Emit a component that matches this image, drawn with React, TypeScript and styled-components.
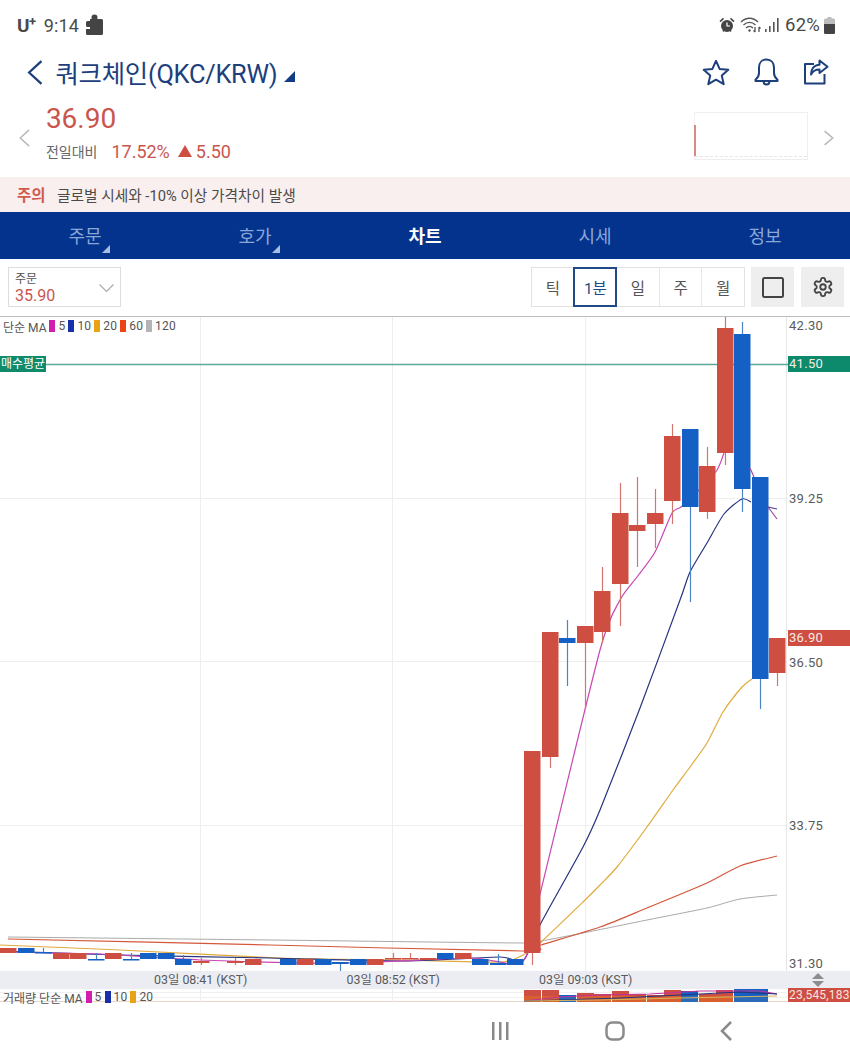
import React from "react";
import styled, { createGlobalStyle } from "styled-components";

const Global = createGlobalStyle`
  html, body { margin: 0; padding: 0; background: #fff; }
  #root { width: 850px; height: 1062px; overflow: hidden; }
  * { box-sizing: border-box; }
`;

const FONT = `Roboto, "Noto Sans CJK KR", "Noto Sans", sans-serif`;
const RED = "#cf4e42";
const BLUE = "#1560c4";
const NAVY = "#1d3f7c";

const Page = styled.div`
  width: 850px; height: 1062px; display: flex; flex-direction: column;
  font-family: ${FONT}; background: #fff; color: #444;
`;

/* status bar */
const StatusBar = styled.div`
  height: 46px; flex: none; display: flex; align-items: center; justify-content: space-between;
  padding: 4px 15px 0 17px; color: #4a4a4a;
`;
const StatusGroup = styled.div`display: flex; align-items: center;`;
const Carrier = styled.span`font-size: 19px; font-weight: 700; margin-right: 8px; letter-spacing: -0.5px; sup { font-size: 13px; line-height: 0; vertical-align: 6px; }`;
const Clock = styled.span`font-size: 18px; margin-right: 6px; letter-spacing: 0.2px;`;
const Battery = styled.span`font-size: 18.5px; margin: 0 4px 0 5px; letter-spacing: 0.2px;`;

/* header */
const Header = styled.div`
  height: 52px; flex: none; display: flex; align-items: center; padding: 0 21px 0 26px; color: ${NAVY};
`;
const Title = styled.h1`
  margin: 0 7px 0 13px; font-size: 25.4px; font-weight: 400; letter-spacing: -0.25px; color: ${NAVY};
`;
const HeaderIcons = styled.div`margin-left: auto; display: flex; align-items: center; gap: 24px;`;

/* price row */
const PriceRow = styled.div`
  height: 79px; flex: none; display: flex; align-items: center; padding: 0 16px 0 18px;
`;
const PriceBlock = styled.div`margin-left: 16px; align-self: flex-start; display: flex; flex-direction: column; padding-top: 3px;`;
const Price = styled.div`font-size: 28px; line-height: 36px; color: #c9564e;`;
const ChangeLine = styled.div`display: flex; align-items: center; height: 26px; margin-top: 1px; color: #c9564e; font-size: 18px;`;
const ChangeLabel = styled.span`font-size: 14px; color: #666; margin-right: 14px;`;
const UpMark = styled.span`
  width: 0; height: 0; margin: 0 4px 0 8px;
  border-left: 7.5px solid transparent; border-right: 7.5px solid transparent; border-bottom: 12px solid #cf4e42;
`;
const Spark = styled.div`
  margin-left: auto; align-self: flex-start; margin-top: 14px; width: 114px; height: 48px; border: 1px solid #f0eeee; position: relative;
  border-bottom-color: #eee;
`;
const SparkTick = styled.span`position: absolute; left: -1px; top: 12px; width: 2px; height: 31px; background: #d98a84;`;
const SparkBase = styled.span`position: absolute; left: 0; right: 0; top: 43px; border-top: 1px dashed #e8e4e4;`;

/* notice */
const Notice = styled.div`
  height: 35px; flex: none; background: #f9efee; display: flex; align-items: center; padding: 0 0 1px 17px; font-size: 14.7px; color: #4a4a4a;
`;
const NoticeTag = styled.b`color: #cf5a4e; font-size: 15.5px; width: 40px; font-weight: 700;`;

/* tabs */
const Tabs = styled.div`
  height: 47px; flex: none; background: #04338d; display: grid; grid-template-columns: repeat(5, 170px);
`;
const Tab = styled.div<{ $active?: boolean; $menu?: boolean }>`
  position: relative; display: flex; align-items: center; justify-content: center;
  font-size: 18px; padding-bottom: 1px; font-weight: ${(p) => (p.$active ? 700 : 400)};
  color: ${(p) => (p.$active ? "#fff" : "#8ba7d8")};
  &::after {
    content: ""; display: ${(p) => (p.$menu ? "block" : "none")}; position: absolute;
    left: calc(50% + 17px); top: 33px; width: 0; height: 0;
    border-left: 8px solid transparent; border-bottom: 8px solid #a6bce4;
  }
`;

/* toolbar */
const Toolbar = styled.div`
  height: 57px; flex: none; display: flex; align-items: center; padding: 0 6px 1px 8px;
`;
const Select = styled.div`
  width: 113px; height: 40px; border: 1px solid #ddd; display: flex; align-items: center; justify-content: space-between;
  padding: 2px 6px 0 6px;
`;
const SelectText = styled.div`display: flex; flex-direction: column; line-height: 15px; font-size: 12px; color: #555;`;
const SelectValue = styled.span`font-size: 16px; line-height: 17px; color: #c9564e;`;
const Segments = styled.div`
  margin-left: auto; display: flex; width: 214px; height: 40px; border: 1px solid #e2e2e2;
`;
const Segment = styled.div<{ $on?: boolean }>`
  flex: 1; display: flex; align-items: center; justify-content: center; font-size: 15.5px; color: ${(p) => (p.$on ? "#1f4a86" : "#555")};
  border-left: 1px solid #e6e6e6;
  &:first-child { border-left: 0; }
  ${(p) => p.$on && `outline: 2px solid #1f4a86; outline-offset: -1px; z-index: 1;`}
`;
const ToolButton = styled.div`
  width: 43px; height: 40px; margin-left: 6px; background: #eeeeee; display: flex; align-items: center; justify-content: center;
  & + & { margin-left: 7px; }
`;

/* chart */
const Chart = styled.div`flex: none; height: 686px; display: flex; flex-direction: column; border-top: 1px solid #bdbdbd;`;
const PricePane = styled.div`position: relative; height: 654px;`;
const PaneSvg = styled.svg`display: block; position: absolute; left: 0; top: 0;`;
const Legend = styled.div<{ $pos: number }>`
  position: absolute; left: 3px; top: ${(p) => p.$pos}px; display: flex; align-items: center; font-size: 12px; height: 14px; color: #555; z-index: 2;
`;
const LegendName = styled.span`margin-right: 3px;`;
const Swatch = styled.i<{ $c: string }>`
  display: block; width: 6px; height: 12px; background: ${(p) => p.$c}; margin-right: 3px;
`;
const LegendNum = styled.span`margin-right: 3px; letter-spacing: 0.2px;`;
const PriceLabel = styled.span`
  position: absolute; left: 789px; transform: translateY(-50%); font-size: 13px; color: #5a5a5a; letter-spacing: 0.3px;
`;
const PriceTag = styled.span<{ $c: string }>`
  position: absolute; left: 788px; width: 62px; height: 16px; padding-left: 1px; background: ${(p) => p.$c};
  color: #f4ece6; font-size: 13px; line-height: 16px; letter-spacing: 0.3px;
`;
const AvgTag = styled.span`
  position: absolute; left: 0; top: 39px; width: 46px; height: 16px; background: #0f8b6c; color: #fff;
  font-size: 12px; line-height: 16px; text-align: center; white-space: nowrap; overflow: hidden;
`;
const TimeBand = styled.div`
  position: relative; height: 18px; flex: none; background: #ebedf3; font-size: 12.4px; color: #5a5a5a; line-height: 18px;
  display: grid; grid-template-columns: 154px 192.5px 192.5px 1fr;
`;
const TimeCell = styled.span`white-space: nowrap;`;
const SortMark = styled.span`
  position: absolute; left: 812px; top: 2px; display: flex; flex-direction: column; gap: 2px;
  &::before, &::after { content: ""; width: 0; height: 0; border-left: 6.5px solid transparent; border-right: 6.5px solid transparent; }
  &::before { border-bottom: 6px solid #8d8d8d; }
  &::after { border-top: 6px solid #8d8d8d; }
`;
const VolumePane = styled.div`position: relative; height: 13px; flex: none;`;
const VolumeTag = styled.span`
  position: absolute; left: 788px; top: -1px; width: 62px; height: 14px; background: ${RED}; color: #f6e4df;
  font-size: 12px; line-height: 14px; padding-left: 1px; white-space: nowrap; z-index: 2; letter-spacing: 0.2px;
`;

/* nav */
const NavBar = styled.div`
  flex: 1; display: flex; align-items: center; padding: 0 118px 2px 490px; justify-content: space-between;
`;

const TOP = 317;
type C = [number, number, number, number, number, "r" | "b" | "h"];
const candles: C[] = [
  [777, 638, 673, 638, 686, "r"], [760, 477, 679, 477, 709, "b"], [742, 334, 489, 322, 512, "b"],
  [725, 328, 453, 316, 465, "r"], [707, 466, 512, 447, 519, "r"], [690, 429, 507, 429, 602, "b"],
  [672, 436, 501, 424, 524, "r"], [655, 513, 524, 489, 548, "r"], [637, 525, 531, 477, 567, "r"],
  [620, 513, 584, 483, 626, "r"], [602, 591, 632, 567, 643, "r"], [585, 626, 643, 626, 709, "r"],
  [567, 638, 643, 620, 686, "b"], [550, 632, 757, 632, 768, "r"], [532, 751, 953, 751, 965, "r"],
  [515, 959, 965, 959, 965, "b"], [498, 963, 965, 954, 965, "h"], [480, 959, 965, 959, 965, "b"],
  [463, 953, 959, 953, 959, "r"], [445, 953, 959, 953, 959, "b"], [428, 958, 960, 958, 960, "r"], [410, 958, 959, 953, 959, "r"],
  [393, 958, 959, 953, 959, "r"], [375, 959, 965, 959, 965, "r"], [358, 959, 965, 959, 965, "b"],
  [340, 962, 964, 962, 971, "b"], [323, 959, 965, 959, 965, "b"], [305, 959, 965, 959, 965, "r"],
  [288, 959, 965, 959, 965, "b"], [253, 959, 965, 959, 965, "r"], [235, 961, 963, 958, 965, "r"], [201, 961, 963, 958, 965, "r"],
  [183, 959, 965, 955, 965, "b"], [166, 953, 959, 953, 959, "b"], [148, 953, 959, 953, 959, "b"],
  [131, 959, 959, 953, 959, "h"], [113, 953, 959, 953, 959, "r"], [96, 959, 959, 953, 959, "h"],
  [78, 953, 959, 953, 959, "r"], [61, 953, 959, 953, 959, "r"], [43, 952, 952, 948, 953, "h"],
  [26, 948, 953, 948, 953, "b"], [8, 948, 953, 948, 953, "r"],
];
/* a smooth curve through the sampled points of a moving average */
const smooth = (pts: number[][], off: number) => {
  const p = pts.map(([x, y]) => [x, y - off]);
  let d = `M${p[0][0]},${p[0][1]}`;
  for (let i = 0; i < p.length - 1; i++) {
    const a = p[Math.max(i - 1, 0)], b = p[i], c = p[i + 1], e = p[Math.min(i + 2, p.length - 1)];
    const k = 0.12;
    d += ` C${b[0] + (c[0] - a[0]) * k},${b[1] + (c[1] - a[1]) * k} ${c[0] - (e[0] - b[0]) * k},${c[1] - (e[1] - b[1]) * k} ${c[0]},${c[1]}`;
  }
  return d;
};
const ma5 = [[0, 952], [100, 954], [200, 960], [340, 963], [470, 958], [523, 961], [541, 890], [600, 650], [620, 600], [637, 577], [655, 552], [672, 513], [681, 507], [699, 490], [717, 470], [724, 453]];
const ma5b = [[750, 468], [754, 477]];
const ma5c = [[768, 507], [777, 519]];
const ma10 = [[0, 951], [120, 955], [270, 958], [400, 961], [500, 957], [523, 961], [541, 923], [583, 847], [600, 810], [640, 708], [680, 600], [690, 572], [707, 543], [724, 514], [742, 499], [751, 502]];
const ma10b = [[768, 507], [777, 509]];
const ma20 = [[0, 945], [120, 950], [280, 958], [400, 960], [500, 962], [523, 955], [541, 942], [583, 902], [600, 885], [617, 867], [647, 827], [673, 790], [690, 767], [707, 743], [723, 712], [742, 687], [752, 679]];
const ma60 = [[8, 939], [270, 945], [523, 951], [541, 945], [600, 927], [647, 908], [707, 883], [740, 866], [777, 856]];
const ma120 = [[8, 937], [270, 940], [523, 943], [541, 941], [583, 933], [647, 920], [707, 908], [740, 899], [777, 895]];
const Line = ({ pts, c, w = 1.2 }: { pts: number[][]; c: string; w?: number }) => (
  <path d={smooth(pts, TOP)} fill="none" stroke={c} strokeWidth={w} />
);

const volumes: [number, number, "r" | "b"][] = [
  [524, 990, "r"], [542, 990, "r"], [559, 995, "b"], [577, 993, "r"], [594, 994, "r"], [612, 991, "r"], [629, 994, "r"],
  [647, 995, "r"], [664, 990, "r"], [681, 991, "b"], [699, 994, "r"], [716, 990, "r"], [734, 988, "b"], [751, 988, "b"],
];

const Back = ({ size, color, w }: { size: number; color: string; w: number }) => (
  <svg width={size * 0.66} height={size} viewBox="0 0 16 24" fill="none" stroke={color} strokeWidth={w}>
    <path d="M15 1 3 12l12 11" />
  </svg>
);

export default function App() {
  return (
    <Page>
      <Global />
      <StatusBar>
        <StatusGroup>
          <Carrier>U<sup>+</sup></Carrier>
          <Clock>9:14</Clock>
          <svg width="18" height="22" viewBox="0 0 18 22" fill="#444">
            <circle cx="9.500" cy="3.500" r="3" />
            <path d="M5 5h11.500A1.500 1.500 0 0 1 18 6.500v13a1.500 1.500 0 0 1-1.500 1.500h-14A1.500 1.500 0 0 1 1 19.500V15h4v-2H2.500A1.500 1.500 0 0 1 1 11.500v-3A1.500 1.500 0 0 1 2.500 7H5z" />
          </svg>
        </StatusGroup>
        <StatusGroup>
          <svg width="16" height="16" viewBox="0 0 16 16" fill="#444" style={{ marginRight: 5 }}>
            <circle cx="8" cy="9" r="6" />
            <path d="M0.5 4 4 .8 5 2 1.600 5.200zM15.500 4 12 .8 11 2l3.400 3.200zM3.500 14l1-1.200 1 .8L4.300 15zM12.500 14l-1-1.200-1 .8 1 1.400z" />
            <path d="M8 5.500V9h3" stroke="#fff" strokeWidth="1.200" fill="none" />
          </svg>
          <svg width="21" height="18" viewBox="0 0 21 18" fill="none" stroke="#555" strokeWidth="1.300" style={{ marginRight: 4 }}>
            <path d="M1 6c5-5 12-5 17 0M3.500 9c3.500-3.500 8.500-3.500 12 0M6 12c2-2 5-2 7 0" />
            <circle cx="9.500" cy="14.500" r="1.200" fill="#555" stroke="none" />
            <path d="M15 11v5M13.500 14.500l1.500 1.500M19 11v5M19 11l1.500 1.500" />
          </svg>
          <svg width="15" height="16" viewBox="0 0 15 16" fill="#555">
            <rect x="0" y="12" width="1.600" height="3" />
            <rect x="4" y="9" width="1.600" height="6" />
            <rect x="8" y="5" width="1.600" height="10" />
            <rect x="12" y="1" width="1.600" height="14" />
          </svg>
          <Battery>62%</Battery>
          <svg width="11" height="17" viewBox="0 0 11 17" fill="#444">
            <path d="M3.500 0h4v1.500h2A1.500 1.500 0 0 1 11 3v12.500a1.500 1.500 0 0 1-1.500 1.500h-8A1.500 1.500 0 0 1 0 15.500V3a1.500 1.500 0 0 1 1.500-1.500h2z" fill="#bdbdbd" />
            <path d="M0 7h11v8.500a1.500 1.500 0 0 1-1.500 1.500h-8A1.500 1.500 0 0 1 0 15.500z" />
          </svg>
        </StatusGroup>
      </StatusBar>

      <Header>
        <Back size={25} color={NAVY} w={2.200} />
        <Title>쿼크체인(QKC/KRW)</Title>
        <svg width="11" height="11" viewBox="0 0 11 11" fill="#123d84" style={{ marginTop: 9 }}>
          <path d="M11 0v11H0z" />
        </svg>
        <HeaderIcons>
          <svg width="28" height="27" viewBox="0 0 28 27" fill="none" stroke={NAVY} strokeWidth="2" strokeLinejoin="round">
            <path d="M14 1.800l3.600 8.100 8.700.9-6.500 5.800 1.900 8.600L14 20.700l-7.700 4.500 1.900-8.600-6.500-5.800 8.700-.9z" />
          </svg>
          <svg width="25" height="28" viewBox="0 0 25 28" fill="none" stroke={NAVY} strokeWidth="2" strokeLinejoin="round">
            <path d="M12.500 1.500c-4.800 0-7.500 3.500-7.500 8v5.500c0 3-1.500 5-3.500 6.700V23h22v-1.300c-2-1.700-3.500-3.700-3.500-6.700V9.500c0-4.500-2.700-8-7.500-8z" />
            <path d="M9.500 23c0 2 1.300 3.500 3 3.500s3-1.500 3-3.500" />
          </svg>
          <svg width="26" height="26" viewBox="0 0 26 26" fill="none" stroke={NAVY} strokeWidth="2" strokeLinejoin="round">
            <path d="M11 5H2v19.500h19.500V15" />
            <path d="M16.500 1.500l8 6.300-8 6.200V10.500c-4.500 0-7 2-8.500 5 0-5.500 3-9.500 8.500-9.800z" fill="#fff" />
          </svg>
        </HeaderIcons>
      </Header>

      <PriceRow>
        <Back size={18} color="#b9b9b9" w={2} />
        <PriceBlock>
          <Price>36.90</Price>
          <ChangeLine>
            <ChangeLabel>전일대비</ChangeLabel>
            17.52%
            <UpMark />
            5.50
          </ChangeLine>
        </PriceBlock>
        <Spark><SparkTick /><SparkBase /></Spark>
        <svg width="10" height="18" viewBox="0 0 16 24" fill="none" stroke="#b9b9b9" strokeWidth="2.500" style={{ marginLeft: 16 }}>
          <path d="M1 1l13 11L1 23" />
        </svg>
      </PriceRow>

      <Notice>
        <NoticeTag>주의</NoticeTag>
        글로벌 시세와 -10% 이상 가격차이 발생
      </Notice>

      <Tabs>
        <Tab $menu>주문</Tab>
        <Tab $menu>호가</Tab>
        <Tab $active>차트</Tab>
        <Tab>시세</Tab>
        <Tab>정보</Tab>
      </Tabs>

      <Toolbar>
        <Select>
          <SelectText>주문<SelectValue>35.90</SelectValue></SelectText>
          <svg width="15" height="9" viewBox="0 0 15 9" fill="none" stroke="#aaa" strokeWidth="1.200"><path d="M.5.500l7 7 7-7" /></svg>
        </Select>
        <Segments>
          <Segment>틱</Segment>
          <Segment $on>1분</Segment>
          <Segment>일</Segment>
          <Segment>주</Segment>
          <Segment>월</Segment>
        </Segments>
        <ToolButton>
          <svg width="22" height="21" viewBox="0 0 22 21" fill="none" stroke="#444" strokeWidth="2"><rect x="1" y="1" width="20" height="19" rx="1.500" /></svg>
        </ToolButton>
        <ToolButton>
          <svg width="22" height="22" viewBox="0 0 24 24" fill="none" stroke="#444" strokeWidth="2" strokeLinejoin="round">
            <path d="M12.220 2h-.44a2 2 0 0 0-2 2v.18a2 2 0 0 1-1 1.730l-.43.25a2 2 0 0 1-2 0l-.15-.08a2 2 0 0 0-2.730.73l-.22.38a2 2 0 0 0 .73 2.730l.15.1a2 2 0 0 1 1 1.720v.51a2 2 0 0 1-1 1.740l-.15.09a2 2 0 0 0-.73 2.730l.22.38a2 2 0 0 0 2.730.73l.15-.08a2 2 0 0 1 2 0l.43.25a2 2 0 0 1 1 1.730V20a2 2 0 0 0 2 2h.44a2 2 0 0 0 2-2v-.18a2 2 0 0 1 1-1.730l.43-.25a2 2 0 0 1 2 0l.15.08a2 2 0 0 0 2.730-.73l.22-.39a2 2 0 0 0-.73-2.730l-.15-.08a2 2 0 0 1-1-1.740v-.5a2 2 0 0 1 1-1.740l.15-.09a2 2 0 0 0 .73-2.730l-.22-.38a2 2 0 0 0-2.730-.73l-.15.08a2 2 0 0 1-2 0l-.43-.25a2 2 0 0 1-1-1.730V4a2 2 0 0 0-2-2z" />
            <circle cx="12" cy="12" r="3" />
          </svg>
        </ToolButton>
      </Toolbar>

      <Chart>
        <PricePane>
          <PaneSvg width="850" height="654">
            {[498, 661, 825].map((y) => <line key={y} x1="0" x2="787" y1={y - TOP + 0.5} y2={y - TOP + 0.5} stroke="#eeeeee" />)}
            {[200, 392, 585].map((x) => <line key={x} x1={x + 0.5} x2={x + 0.5} y1="0" y2="654" stroke="#eeeeee" />)}
            <line x1="786.500" x2="786.500" y1="0" y2="654" stroke="#e6e6e6" />
            <Line pts={ma120} c="#a9a9a9" w={1} />
            <Line pts={ma60} c="#d4573a" />
            <Line pts={ma20} c="#e0aa3e" />
            <Line pts={ma10} c="#26337f" />
            <Line pts={ma5} c="#c947b4" />
            <line x1="0" x2="788" y1={47.500} y2={47.500} stroke="#5fa99a" strokeWidth="1.400" />
            {candles.map(([x, t, b, wt, wb, k], i) => {
              const c = k === "r" ? RED : BLUE;
              const wick = k === "r" ? "#d0766e" : "#4d84c6";
              return (
                <g key={i}>
                  <line x1={x + 0.5} x2={x + 0.5} y1={wt - TOP} y2={wb - TOP} stroke={wick} strokeWidth="1.200" />
                  <rect x={x - 8} y={t - TOP} width="16.500" height={Math.max(b - t, 1.500)} fill={c} />
                </g>
              );
            })}
            <Line pts={ma5b} c="#b04ba0" />
            <Line pts={ma5c} c="#a34ba8" />
            <Line pts={ma10b} c="#4a3d96" />
          </PaneSvg>
          <Legend $pos={2}>
            <LegendName>단순 MA</LegendName>
            <Swatch $c="#d11db0" /><LegendNum>5</LegendNum>
            <Swatch $c="#1730a8" /><LegendNum>10</LegendNum>
            <Swatch $c="#e8a317" /><LegendNum>20</LegendNum>
            <Swatch $c="#ee4415" /><LegendNum>60</LegendNum>
            <Swatch $c="#b4b4b4" /><LegendNum>120</LegendNum>
          </Legend>
          <AvgTag>매수평균</AvgTag>
          <PriceLabel style={{ top: 8 }}>42.30</PriceLabel>
          <PriceTag $c="#0c8a6b" style={{ top: 39 }}>41.50</PriceTag>
          <PriceLabel style={{ top: 181 }}>39.25</PriceLabel>
          <PriceTag $c={RED} style={{ top: 313 }}>36.90</PriceTag>
          <PriceLabel style={{ top: 345 }}>36.50</PriceLabel>
          <PriceLabel style={{ top: 508 }}>33.75</PriceLabel>
          <PriceLabel style={{ top: 646 }}>31.30</PriceLabel>
        </PricePane>
        <TimeBand>
          <span />
          <TimeCell>03일 08:41 (KST)</TimeCell>
          <TimeCell>03일 08:52 (KST)</TimeCell>
          <TimeCell>03일 09:03 (KST)</TimeCell>
          <SortMark />
        </TimeBand>
        <VolumePane>
          <PaneSvg width="850" height="13">
            {[3.500, 8.500, 12.500].map((y) => <line key={y} x1="0" x2="787" y1={y} y2={y} stroke={y > 12 ? "#ecd6c8" : "#efefef"} />)}
            {[200, 392, 585].map((x) => <line key={x} x1={x + 0.5} x2={x + 0.5} y1="0" y2="13" stroke="#eeeeee" />)}
            {volumes.map(([x, y, k], i) => (
              <g key={i}>
                <rect x={x} y={y - 989} width="17" height={1002 - y} fill={k === "r" ? RED : BLUE} />
                <rect x={x} y={996 - 989} width="17" height="6" fill={k === "r" ? "#d8602f" : "#2a6ab8"} />
              </g>
            ))}
            <polyline points="524,12 559,8 600,6 650,5 700,2 760,2 777,5" fill="none" stroke="#c3329a" strokeWidth="1.200" />
            <polyline points="524,12 559,11 620,9 680,6 740,3 777,5" fill="none" stroke="#26337f" strokeWidth="1.200" />
            <polyline points="524,12 600,11 680,9 777,7" fill="none" stroke="#d8b35a" strokeWidth="1" />
          </PaneSvg>
          <Legend $pos={1}>
            <LegendName>거래량 단순 MA</LegendName>
            <Swatch $c="#d11db0" /><LegendNum>5</LegendNum>
            <Swatch $c="#1730a8" /><LegendNum>10</LegendNum>
            <Swatch $c="#e8a317" /><LegendNum>20</LegendNum>
          </Legend>
          <VolumeTag>23,545,183</VolumeTag>
        </VolumePane>
      </Chart>

      <NavBar>
        <svg width="20" height="20" viewBox="0 0 20 20" fill="#8a8a8a">
          <rect x="2" y="1" width="2.500" height="18" /><rect x="9" y="1" width="2.500" height="18" /><rect x="16" y="1" width="2.500" height="18" />
        </svg>
        <svg width="20" height="20" viewBox="0 0 20 20" fill="none" stroke="#8a8a8a" strokeWidth="2.500"><rect x="1.500" y="1.500" width="17" height="17" rx="5.500" /></svg>
        <svg width="12" height="20" viewBox="0 0 12 20" fill="none" stroke="#8a8a8a" strokeWidth="2.500"><path d="M11 1 2 10l9 9" /></svg>
      </NavBar>
    </Page>
  );
}
